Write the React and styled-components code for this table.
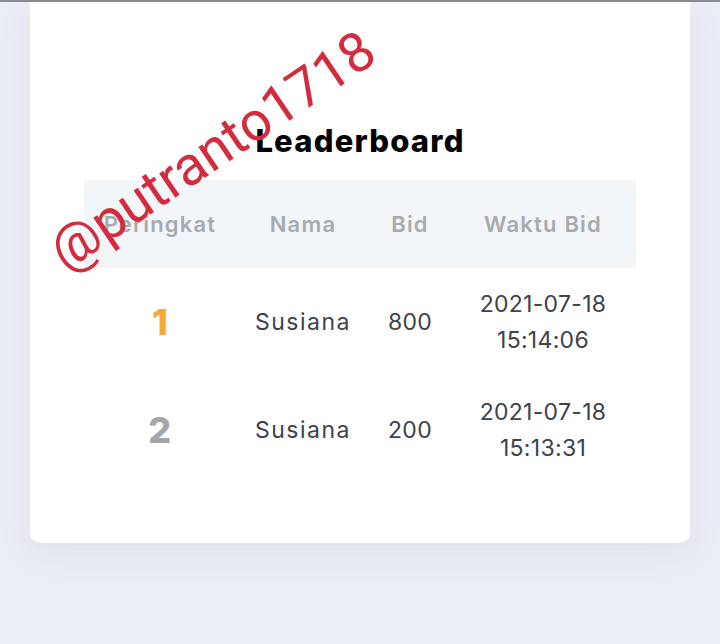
import React from 'react';
import styled, { createGlobalStyle } from 'styled-components';

const GlobalStyle = createGlobalStyle`
    html, body {
        margin: 0;
        padding: 0;
        background: #eceef6;
        font-family: Inter, "Open Sans", sans-serif;
    }
`;

const Page = styled.div`
    position: relative;
    width: 720px;
    height: 644px;
    overflow: hidden;
    border-top: 2px solid #8a8b8f;
    box-sizing: border-box;
`;

const Card = styled.div`
    margin: 0 30px;
    height: 541px;
    background: #fff;
    border-radius: 0 0 10px 10px;
    box-shadow: 0 10px 30px rgba(120, 130, 170, 0.12);
    box-sizing: border-box;
    padding-top: 120px;
    display: flex;
    flex-direction: column;
    align-items: center;
`;

const Title = styled.h2`
    margin: 0 0 20px;
    font-size: 31px;
    font-weight: 800;
    color: #000;
    line-height: 38px;
    letter-spacing: 1.2px;
`;

const Table = styled.div`
    width: 552px;
    display: grid;
    grid-template-columns: 152px 134px 80px 186px;
`;

const HeadCell = styled.div`
    height: 88px;
    background: #f3f6f9;
    display: flex;
    align-items: center;
    justify-content: center;
    font-size: 22px;
    font-weight: 600;
    letter-spacing: 1.2px;
    color: #a7abaf;
`;

const Cell = styled.div`
    height: 108px;
    display: flex;
    align-items: center;
    justify-content: center;
    text-align: center;
    font-size: 23px;
    line-height: 36px;
    letter-spacing: ${props => (props.$wide ? '1.5px' : '0.3px')};
    color: #3e4249;
`;

const Rank = styled(Cell)`
    font-size: 36px;
    font-weight: 800;
    color: ${props => (props.$first ? '#f7a934' : '#a3a7ab')};
`;

const Watermark = styled.div`
    position: absolute;
    left: 212px;
    top: 148px;
    font-family: Roboto, "Liberation Sans", sans-serif;
    font-size: 55px;
    color: #d42b3e;
    white-space: nowrap;
    transform: translate(-50%, -50%) rotate(-34deg);
    pointer-events: none;
`;

const rows = [
    { rank: 1, name: 'Susiana', bid: 800, date: '2021-07-18', time: '15:14:06' },
    { rank: 2, name: 'Susiana', bid: 200, date: '2021-07-18', time: '15:13:31' },
];

const App = () => (
    <>
        <GlobalStyle />
        <Page>
            <Card>
                <Title>Leaderboard</Title>
                <Table>
                    <HeadCell>Peringkat</HeadCell>
                    <HeadCell>Nama</HeadCell>
                    <HeadCell>Bid</HeadCell>
                    <HeadCell>Waktu Bid</HeadCell>
                    {rows.map(r => (
                        <React.Fragment key={r.rank}>
                            <Rank $first={r.rank === 1}>{r.rank}</Rank>
                            <Cell $wide>{r.name}</Cell>
                            <Cell>{r.bid}</Cell>
                            <Cell>
                                {r.date}
                                <br />
                                {r.time}
                            </Cell>
                        </React.Fragment>
                    ))}
                </Table>
            </Card>
            <Watermark>@putranto1718</Watermark>
        </Page>
    </>
);

export default App;
